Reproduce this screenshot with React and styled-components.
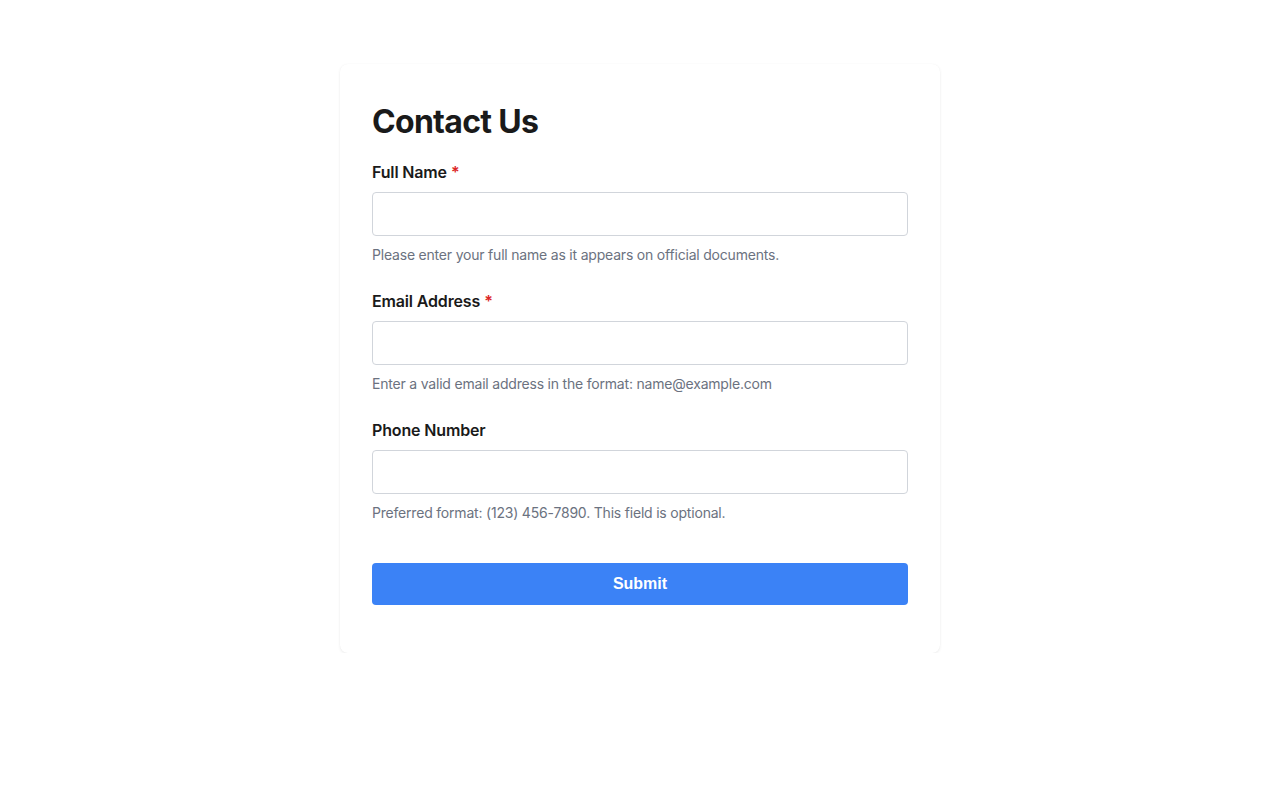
import React from "react";
import styled, { createGlobalStyle } from "styled-components";

const Global = createGlobalStyle`
  html, body { margin: 0; padding: 0; background: #ffffff; }
  body { font-family: Inter, "Liberation Sans", sans-serif; color: #1a1a1a; }
  * { box-sizing: border-box; }
`;

const Page = styled.div`
  display: flex;
  justify-content: center;
  padding-top: 64px;
`;

const Card = styled.form`
  width: 600px;
  background: #fff;
  border-radius: 8px;
  box-shadow: 0 1px 3px rgba(0, 0, 0, 0.08), 0 0 1px rgba(0, 0, 0, 0.04);
  padding: 33px 32px 48px;
`;

const Title = styled.h1`
  margin: 6px 0 19px;
  font-size: 32px;
  line-height: 38px;
  font-weight: 700;
  color: #1a1a1a;
  letter-spacing: -0.7px;
`;

const Field = styled.div`
  display: flex;
  flex-direction: column;
  margin-bottom: 24px;
`;

const Label = styled.label`
  font-size: 16px;
  line-height: 24px;
  font-weight: 600;
  color: #1a1a1a;
  margin-bottom: 8px;
  letter-spacing: -0.15px;
`;

const Required = styled.span`
  color: #dc2626;
  margin-left: 4px;
`;

const Input = styled.input`
  height: 44px;
  width: 100%;
  border: 1px solid #d1d5db;
  border-radius: 4px;
  padding: 0 12px;
  font-size: 16px;
  font-family: inherit;
  background: #fff;
  outline: none;
`;

const Help = styled.p`
  margin: 8px 0 0;
  font-size: 14px;
  line-height: 21px;
  color: #6b7280;
  letter-spacing: -0.2px;
`;

const Button = styled.button`
  width: 100%;
  margin-top: 16px;
  height: 42px;
  border: none;
  border-radius: 4px;
  background: #3b82f6;
  color: #fff;
  font-family: "Liberation Sans", Arial, sans-serif;
  font-size: 16px;
  font-weight: 700;
  cursor: pointer;
`;

const fields = [
  {
    id: "name",
    label: "Full Name",
    required: true,
    type: "text",
    help: "Please enter your full name as it appears on official documents.",
  },
  {
    id: "email",
    label: "Email Address",
    required: true,
    type: "email",
    help: "Enter a valid email address in the format: name@example.com",
  },
  {
    id: "phone",
    label: "Phone Number",
    required: false,
    type: "tel",
    help: "Preferred format: (123) 456-7890. This field is optional.",
  },
];

export default function App() {
  return (
    <>
      <Global />
      <Page>
        <Card onSubmit={(e) => e.preventDefault()}>
          <Title>Contact Us</Title>
          {fields.map((f) => (
            <Field key={f.id}>
              <Label htmlFor={f.id}>
                {f.label}
                {f.required && <Required>*</Required>}
              </Label>
              <Input id={f.id} type={f.type} />
              <Help>{f.help}</Help>
            </Field>
          ))}
          <Button type="submit">Submit</Button>
        </Card>
      </Page>
    </>
  );
}
